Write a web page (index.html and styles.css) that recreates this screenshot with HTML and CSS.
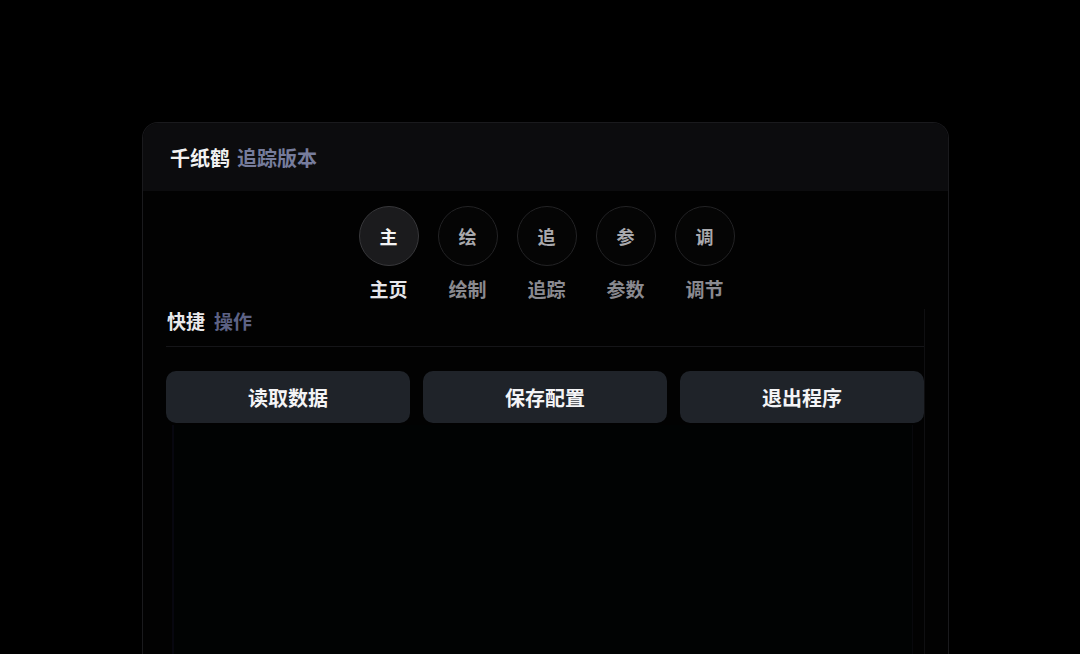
FILE: index.html
```
<!DOCTYPE html>
<html lang="zh">
<head>
<meta charset="utf-8">
<link rel="stylesheet" href="styles.css">
</head>
<body>
<div class="card">
  <div class="header"><span class="t1">千纸鹤</span><span class="t2">追踪版本</span></div>
  <div class="body">
    <nav class="nav">
      <div class="nav-item active"><div class="circle">主</div><div class="label">主页</div></div>
      <div class="nav-item"><div class="circle">绘</div><div class="label">绘制</div></div>
      <div class="nav-item"><div class="circle">追</div><div class="label">追踪</div></div>
      <div class="nav-item"><div class="circle">参</div><div class="label">参数</div></div>
      <div class="nav-item"><div class="circle">调</div><div class="label">调节</div></div>
    </nav>
    <section class="section">
      <div class="sec-title"><span class="s1">快捷</span><span class="s2">操作</span></div>
      <div class="buttons">
        <button class="btn">读取数据</button>
        <button class="btn">保存配置</button>
        <button class="btn">退出程序</button>
      </div>
      <div class="panel"></div>
    </section>
  </div>
</div>
</body>
</html>
```
FILE: styles.css
```
* { box-sizing: border-box; }
html, body { margin: 0; padding: 0; background: #000; height: 100%; overflow: hidden; }
body { font-family: "Noto Sans CJK SC", "Noto Sans", sans-serif; color: #fff; }
.card {
  margin: 122px 0 0 142px;
  width: 807px;
  height: 532px;
  border: 1px solid #1a1a1d;
  border-bottom: none;
  border-radius: 16px 16px 0 0;
  background: #020202;
  overflow: hidden;
}
.header {
  height: 68px;
  background: #0c0c0e;
  display: flex;
  align-items: center;
  padding-left: 27px;
  font-size: 20px;
  font-weight: 700;
  gap: 7px;
}
.t1 { color: #f2f2f2; }
.t2 { color: #767c9c; }
.body { padding-top: 15px; }
.nav { display: flex; justify-content: center; gap: 19px; margin-left: 2px; }
.nav-item { display: flex; flex-direction: column; align-items: center; width: 60px; }
.circle {
  width: 60px; height: 60px; border-radius: 50%;
  border: 1px solid #232325;
  background: #050505;
  display: flex; align-items: center; justify-content: center;
  font-size: 18px; font-weight: 700; color: #a9a9ad;
}
.active .circle { background: #1b1b1d; border-color: #38383b; color: #f4f4f4; }
.label { margin-top: 11px; font-size: 19px; line-height: 24px; font-weight: 700; color: #8a8a90; white-space: nowrap; }
.active .label { color: #e6e6ea; }
.section {
  margin: 8px 23px 0 23px;
  border-right: 1px solid #0f0f11;
  height: 400px;
}
.sec-title {
  font-size: 19px; font-weight: 700; line-height: 24px;
  display: flex; gap: 9px; padding-left: 1px;
  padding-bottom: 13px;
  border-bottom: 1px solid #151518;
}
.s1 { color: #e8e8ea; }
.s2 { color: #5d6285; }
.buttons { display: grid; grid-template-columns: repeat(3, 1fr); gap: 13px; margin-top: 24px; }
.btn {
  height: 52px; border: none; border-radius: 10px;
  background: #1f2329;
  color: #f4f4f6;
  font-family: inherit; font-size: 20px; font-weight: 700;
}
.panel {
  margin: 2px 11px 0 6px;
  height: 300px;
  background: #010303;
  border-left: 2px solid #07070f;
  border-right: 1px solid #08080c;
}
```
